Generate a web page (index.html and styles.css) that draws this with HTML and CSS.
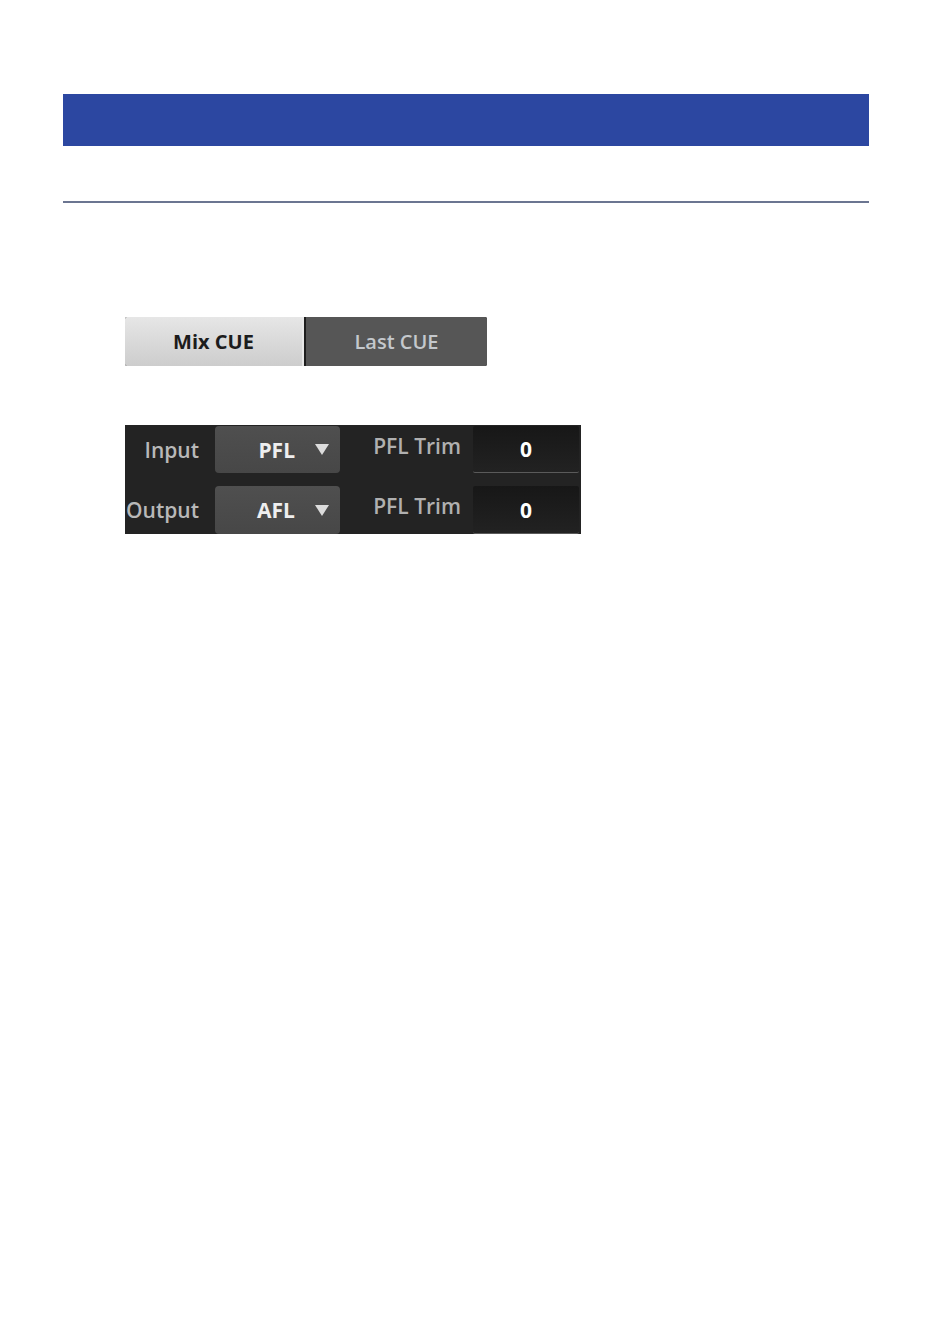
FILE: index.html
```html
<!DOCTYPE html>
<html lang="en">
<head>
  <meta charset="UTF-8">
  <title>CUE</title>
  <link rel="stylesheet" href="styles.css">
</head>
<body>
  <div class="page">
    <div class="title-bar"></div>
    <div class="section-rule"></div>

    <!-- CUE モード切替 -->
    <div class="cue-mode">
      <div class="cue-btn active">Mix CUE</div>
      <div class="cue-btn">Last CUE</div>
    </div>

    <!-- CUE ポイント / トリム -->
    <div class="cue-panel">
      <div class="cue-label">Input</div>
      <div class="cue-select">PFL <span class="arrow"></span></div>
      <div class="trim-label">PFL Trim</div>
      <div class="trim-value">0</div>

      <div class="cue-label">Output</div>
      <div class="cue-select">AFL <span class="arrow"></span></div>
      <div class="trim-label">PFL Trim</div>
      <div class="trim-value">0</div>
    </div>
  </div>
</body>
</html>
```

FILE: styles.css
```css
body {
  margin: 0;
  background-color: #fff;
  font-family: 'Open Sans', 'DejaVu Sans', sans-serif;
}

.page {
  padding: 94px 64px 0 63px;
}

.title-bar {
  height: 52px;
  background-color: #2c47a1;
}

.section-rule {
  height: 2px;
  margin-top: 55px;
  background-color: #6b7591;
}

/* 切替ボタン */
.cue-mode {
  display: flex;
  width: 362px;
  height: 49px;
  margin: 114px 0 0 62px;
  border-radius: 2px;
  overflow: hidden;
  background-color: #1e1e1e;
}

.cue-btn {
  display: flex;
  align-items: center;
  justify-content: center;
  font-size: 20px;
  font-weight: 600;
  color: #c4c8cc;
  background-color: #565656;
}

.cue-btn:first-child {
  width: 179px;
  margin-right: 2px;
}

.cue-btn:last-child {
  flex: 1;
}

.cue-btn.active {
  color: #1c1c1c;
  font-weight: 700;
  background: linear-gradient(#e6e6e6, #cdcdcd);
  border-right: 2px solid #e8e8e8;
  box-sizing: border-box;
}

/* 暗いパネル */
.cue-panel {
  display: grid;
  grid-template-columns: 90px 125px 133px 107px;
  grid-template-rows: 47px 48px;
  row-gap: 13px;
  width: 456px;
  height: 109px;
  box-sizing: border-box;
  padding-top: 1px;
  margin: 59px 0 0 62px;
  background-color: #232323;
  overflow: hidden;
}

.cue-label {
  display: flex;
  align-items: center;
  justify-content: flex-end;
  padding-right: 16px;
  font-size: 21px;
  font-weight: 600;
  color: #b8b8b8;
}

.cue-select {
  display: flex;
  align-items: center;
  justify-content: flex-end;
  gap: 20px;
  padding-right: 11px;
  border-radius: 4px;
  background: linear-gradient(#4f4f4f, #474747);
  font-size: 21px;
  font-weight: 700;
  color: #eeeeee;
}

.arrow {
  width: 0;
  height: 0;
  border-left: 7px solid transparent;
  border-right: 7px solid transparent;
  border-top: 11px solid #dcdcdc;
}

.trim-label {
  display: flex;
  align-items: center;
  justify-content: flex-end;
  padding-right: 12px;
  padding-bottom: 8px;
  font-size: 21px;
  font-weight: 600;
  color: #b0b0b0;
}

.trim-value {
  display: flex;
  align-items: center;
  justify-content: center;
  margin-right: 1px;
  border-radius: 2px;
  border-bottom: 1px solid #5a5a5a;
  background: linear-gradient(#171717, #222222);
  font-size: 21px;
  font-weight: 700;
  color: #ffffff;
}
```
